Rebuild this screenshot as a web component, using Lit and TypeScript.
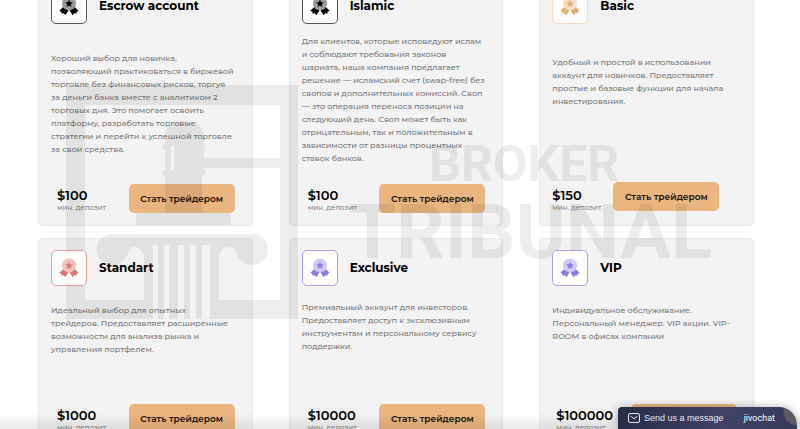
import { LitElement, html, svg, css } from "lit";
import { customElement, property } from "lit/decorators.js";
import { classMap } from "lit/directives/class-map.js";

interface Account {
  name: string;
  tone: string;
  spacing: string;
  footer: string;
  price: string;
  text: string;
}

const ACCOUNTS: Account[] = [
  {
    name: "Escrow account", tone: "black", spacing: "medium", footer: "inset", price: "$100",
    text: "Хороший выбор для новичка,\nпозволяющий практиковаться в биржевой\nторговле без финансовых рисков, торгуя\nза деньги банка вместе с аналитиком 2\nторговых дня. Это помогает освоить\nплатформу, разработать торговые\nстратегии и перейти к успешной торговле\nза свои средства.",
  },
  {
    name: "Islamic", tone: "black", spacing: "tight", footer: "inset", price: "$100",
    text: "Для клиентов, которые исповедуют ислам\nи соблюдают требования законов\nшариата, наша компания предлагает\nрешение — исламский счет (swap-free) без\nсвопов и дополнительных комиссий. Своп\n— это операция переноса позиции на\nследующий день. Своп может быть как\nотрицательным, так и положительным в\nзависимости от разницы процентных\nставок банков.",
  },
  {
    name: "Basic", tone: "orange", spacing: "wide", footer: "start", price: "$150",
    text: "Удобный и простой в использовании\nаккаунт для новичков. Предоставляет\nпростые и базовые функции для начала\nинвестирования.",
  },
  {
    name: "Standart", tone: "red", spacing: "normal", footer: "inset", price: "$1000",
    text: "Идеальный выбор для опытных\nтрейдеров. Предоставляет расширенные\nвозможности для анализа рынка и\nуправления портфелем.",
  },
  {
    name: "Exclusive", tone: "violet", spacing: "snug", footer: "inset", price: "$10000",
    text: "Премиальный аккаунт для инвесторов.\nПредоставляет доступ к эксклюзивным\nинструментам и персональному сервису\nподдержки.",
  },
  {
    name: "VIP", tone: "violet", spacing: "normal", footer: "outer", price: "$100000",
    text: "Индивидуальное обслуживание.\nПерсональный менеджер. VIP акции. VIP-\nROOM в офисах компании",
  },
];

const medal = svg`
  <path class="ribbon" d="M4.200 12 L9.400 15.500 L6.400 20.300 L4.800 18.300 L2.600 18.800 L2.400 17 L0.400 15.800 Z M15.800 12 L10.600 15.500 L13.600 20.300 L15.200 18.300 L17.400 18.800 L17.600 17 L19.600 15.800 Z"/>
  <circle class="disc" cx="10" cy="8.400" r="7"/>
  <path class="star" d="M10 4.500 L11.100 7.200 L14 7.400 L11.800 9.200 L12.500 12 L10 10.500 L7.500 12 L8.200 9.200 L6 7.400 L8.900 7.200 Z"/>`;

@customElement("account-card")
class AccountCard extends LitElement {
  @property({ attribute: false }) account!: Account;

  static styles = css`
    :host {
      display: flex;
      flex-direction: column;
      box-sizing: border-box;
      padding: 11px 12px 12px;
      border: 1px solid #e9e9e9;
      border-radius: 4px;
      background: #f3f3f3;
    }
    .head { display: flex; align-items: center; gap: 12px; }
    .badge {
      --main: #000;
      --soft: #999;
      --edge: #555;
      position: relative;
      z-index: 2;
      box-sizing: border-box;
      width: 36px;
      height: 36px;
      display: flex;
      align-items: center;
      justify-content: center;
      border: 1px solid var(--edge);
      border-radius: 5px;
      background: #fff;
    }
    .orange { --main: #e5ae72; --soft: #f8dcc9; --edge: #f3dcc8; }
    .red { --main: #d87a7a; --soft: #f3c1bd; --edge: #e2a09c; }
    .violet { --main: #887de0; --soft: #cfcbf6; --edge: #aaa1ef; }
    .badge svg { width: 20px; height: 22px; }
    .ribbon, .star { fill: var(--main); }
    .disc { fill: var(--soft); }
    h2 { margin: 0; font-size: 12px; line-height: 16px; font-weight: 700; color: #000; }
    p { margin: 0; font-size: 8px; line-height: 13px; font-weight: 500; color: #777; white-space: pre; }
    .tight { margin-top: 11px; }
    .snug { margin-top: 15px; }
    .normal { margin-top: 18px; }
    .medium { margin-top: 28px; }
    .wide { margin-top: 32px; }
    .foot { display: flex; align-items: flex-end; margin-top: auto; }
    .inset { justify-content: space-between; padding: 0 5px 0 6px; }
    .outer { justify-content: space-between; padding: 0 4px; }
    .start { gap: 12px; }
    .start button { margin-bottom: 2px; }
    .price { display: flex; flex-direction: column; color: #000; }
    .price strong { font-size: 13px; line-height: 16px; font-weight: 600; }
    .price small { font-size: 7px; line-height: 10px; font-weight: 500; color: #888; }
    button {
      width: 106px;
      height: 29px;
      padding: 0;
      border: 0;
      border-radius: 5px;
      background: #ebb57f;
      color: #1a120a;
      font: 600 9px/14px Montserrat, Inter, sans-serif;
      white-space: nowrap;
    }
  `;

  render() {
    const a = this.account;
    return html`
      <div class="head">
        <span class=${classMap({ badge: true, [a.tone]: true })}>
          <svg viewBox="0 0 20 22" aria-hidden="true">${medal}</svg>
        </span>
        <h2>${a.name}</h2>
      </div>
      <p class=${a.spacing}>${a.text}</p>
      <div class=${classMap({ foot: true, [a.footer]: true })}>
        <div class="price"><strong>${a.price}</strong><small>мин. депозит</small></div>
        <button type="button">Стать трейдером</button>
      </div>`;
  }
}

@customElement("app-root")
class AppRoot extends LitElement {
  static styles = css`
    :host {
      display: block;
      position: relative;
      height: 100vh;
      overflow: hidden;
      background: #fff;
      font-family: Montserrat, Inter, sans-serif;
    }
    .accounts {
      display: grid;
      grid-template-columns: repeat(3, minmax(0, 1fr));
      grid-template-rows: minmax(250px, auto) minmax(208px, auto);
      gap: 12px 36px;
      margin-top: -24px;
      padding: 0 46px 0 38px;
    }
    .watermark {
      position: absolute;
      top: 80px;
      left: 60px;
      z-index: 1;
      width: 660px;
      height: 244px;
      opacity: 0.065;
      pointer-events: none;
    }
    .watermark text { font-family: Roboto, sans-serif; font-weight: 700; }
    .broker { font-size: 50px; }
    .tribunal { font-size: 76px; }
    .fade {
      position: absolute;
      inset: auto 0 0 0;
      z-index: 2;
      height: 16px;
      background: linear-gradient(rgba(0, 0, 0, 0), rgba(0, 0, 0, 0.09));
      pointer-events: none;
    }
    .chat {
      position: absolute;
      right: 3px;
      bottom: 0;
      z-index: 3;
      display: flex;
      align-items: center;
      box-sizing: border-box;
      width: 179px;
      height: 22px;
      padding: 0 22px 0 10px;
      border: 0;
      border-radius: 4px 18px 0 0;
      background: radial-gradient(circle at 180px 4px, #5c5c62 14px, transparent 15px),
        linear-gradient(95deg, #272c48, #414267 60%, #353a58);
      box-shadow: 0 0 10px rgba(0, 0, 0, 0.3);
      color: #e8e8ef;
      font: 9px/12px "Liberation Sans", sans-serif;
      overflow: hidden;
    }
    .chat svg { width: 12px; height: 10px; margin-right: 4px; }
    .brand { margin-left: auto; font-family: Roboto, sans-serif; color: #fff; }
  `;

  render() {
    return html`
      <main class="accounts">
        ${ACCOUNTS.map((a) => html`<account-card .account=${a}></account-card>`)}
      </main>
      <svg class="watermark" viewBox="60 80 660 244" aria-hidden="true">
        <path fill-rule="evenodd" d="M66 85 H298 V319 H219 V300 H280 V168 H203 V158 H280 V105 H85 V300 H144 V319 H66 Z"/>
        <path fill-rule="evenodd" d="M168 126 Q183 116 200 126 L204 133 V143 L206 147 L204 151 V169 L206 173 L202 177 V213 H165 V177 L161 173 L165 169 V151 L161 147 L165 143 V133 Z M171 146 V170 H174 V146 Z"/>
        <path d="M139 213 H228 Q231 213 231 216 V225 H136 V216 Q136 213 139 213 Z"/>
        <path d="M113 234 H252 A16 15.500 0 1 1 237 255 Q235 247 229 247 Q219 248 219 258 V319 H210 V245 H202 V319 H196 V245 H190 V319 H184 V245 H178 V319 H169 V245 H164 V319 H158 V245 H153 V319 H144 V258 Q143 247 134 247 Q129 247 128 253 A16 15.500 0 1 1 113 234 Z"/>
        <text class="broker" x="429" y="181">BROKER</text>
        <text class="tribunal" x="349" y="258">TRIBUNAL</text>
      </svg>
      <div class="fade"></div>
      <button class="chat" type="button">
        <svg viewBox="0 0 12 10" fill="none" stroke="currentColor" aria-hidden="true">
          <rect x="0.500" y="0.500" width="11" height="9" rx="1.500"/>
          <path d="M2.500 3 L6 5.800 L9.500 3"/>
        </svg>
        <span>Send us a message</span>
        <span class="brand">jivochat</span>
      </button>`;
  }
}
